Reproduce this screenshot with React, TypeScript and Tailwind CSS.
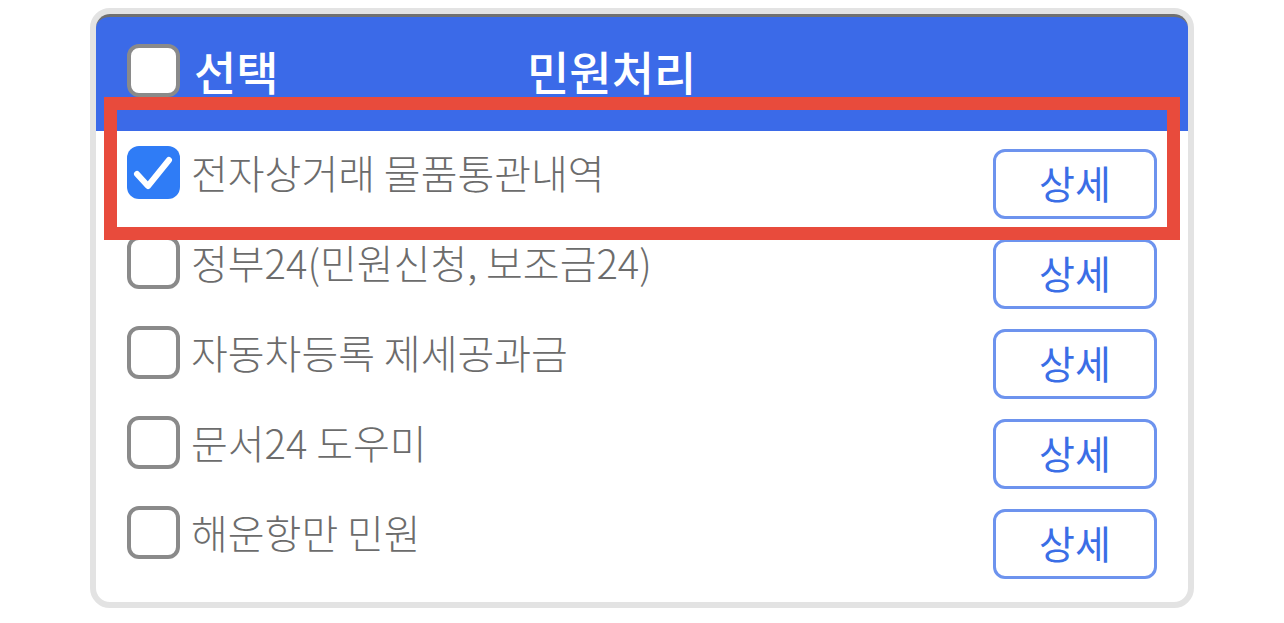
import React from "react";

interface Item {
  label: string;
  checked: boolean;
}

const items: Item[] = [
  { label: "전자상거래 물품통관내역", checked: true },
  { label: "정부24(민원신청, 보조금24)", checked: false },
  { label: "자동차등록 제세공과금", checked: false },
  { label: "문서24 도우미", checked: false },
  { label: "해운항만 민원", checked: false },
];

const CheckBox = ({ checked }: { checked: boolean }) =>
  checked ? (
    <span className="w-[53px] h-[53px] shrink-0 rounded-[12px] bg-[#2f7cf6] block">
      <svg width="53" height="53" viewBox="0 0 53 53" fill="none">
        <path d="M10 28 L21 40 L42 14" stroke="#fff" strokeWidth="6" strokeLinecap="round" strokeLinejoin="round" />
      </svg>
    </span>
  ) : (
    <span className="w-[53px] h-[53px] shrink-0 rounded-[12px] border-[4px] border-[#8a8a8a] bg-white block" />
  );

export default function App() {
  return (
    <div
      className="min-h-screen bg-white flex justify-center pt-[8px]"
      style={{ fontFamily: '"Noto Sans CJK KR", "Noto Sans", sans-serif' }}
    >
      <div className="relative w-[1104px] h-[600px] rounded-[20px] border-[6px] border-[#e3e3e3] bg-white">
        {/* header */}
        <div className="h-[117px] rounded-t-[14px] border-t-[3px] border-[#707070] bg-[#3b6ae8] flex items-start pt-[27px] pl-[31px]">
          <CheckBox checked={false} />
          <span className="ml-[14px] w-[333px] text-white font-medium text-[46px] leading-[53px]">선택</span>
          <span className="text-white font-medium text-[46px] leading-[53px]">민원처리</span>
        </div>

        {/* rows */}
        <div className="flex flex-col gap-[20px] pt-[18px] px-[31px]">
          {items.map((it) => (
            <div key={it.label} className="h-[70px] flex items-start justify-between">
              <div className="flex items-center -mt-[3px]">
                <CheckBox checked={it.checked} />
                <span className="ml-[11px] text-[40px] leading-[53px] font-light text-[#6c6c6c]">{it.label}</span>
              </div>
              <button className="w-[164px] h-[70px] pb-[4px] rounded-[12px] border-[3px] border-[#6d93ee] bg-white text-[39px] leading-none text-[#3a6ee6]">
                상세
              </button>
            </div>
          ))}
        </div>

        {/* highlight */}
        <div className="absolute left-[8px] top-[83px] w-[1076px] h-[143px] border-[13px] border-[#e84b3c] pointer-events-none" />
      </div>
    </div>
  );
}
